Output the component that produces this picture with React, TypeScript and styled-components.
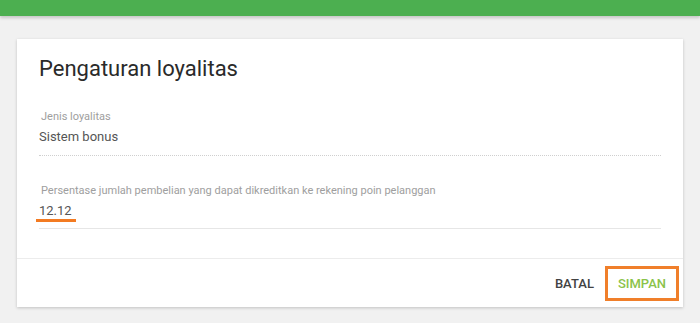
import styled, { createGlobalStyle } from "styled-components";

const GlobalStyle = createGlobalStyle`
  html, body {
    margin: 0;
    padding: 0;
    background: #f1f1f1;
    font-family: Roboto, "Liberation Sans", sans-serif;
  }
`;

const TopBar = styled.div`
  height: 16px;
  background: #4caf50;
  box-shadow: 0 2px 3px rgba(0, 0, 0, 0.18);
`;

const Main = styled.div`
  padding: 23px 17px 16px;
`;

const Card = styled.div`
  background: #fff;
  box-shadow: 0 1px 3px rgba(0, 0, 0, 0.2);
`;

const CardBody = styled.div`
  padding: 17px 22px 29px;
`;

const Title = styled.h2`
  margin: 0 0 28px;
  font-size: 22px;
  line-height: 26px;
  font-weight: 400;
  color: #2a2a2a;
`;

const Field = styled.div<{ $variant: "dotted" | "solid" }>`
  display: flex;
  flex-direction: column;
  padding-bottom: ${(p) => (p.$variant === "dotted" ? "8px" : "7px")};
  border-bottom: 1px ${(p) => p.$variant} ${(p) => (p.$variant === "dotted" ? "#cfcfcf" : "#e6e6e6")};
  & + & {
    margin-top: 28px;
  }
`;

const Label = styled.span`
  font-size: 11px;
  line-height: 14px;
  color: #9e9e9e;
  padding-left: 2px;
`;

const Value = styled.span`
  margin-top: 3px;
  font-size: 13px;
  line-height: 20px;
  color: #555;
`;

const Marked = styled.span`
  position: relative;
  display: inline-block;
  &::after {
    content: "";
    position: absolute;
    left: -3px;
    right: -4px;
    bottom: -1px;
    height: 3px;
    background: #f37b22;
  }
`;

const Footer = styled.div`
  display: flex;
  justify-content: flex-end;
  align-items: center;
  gap: 11px;
  height: 48px;
  padding-right: 4px;
  border-top: 1px solid #ececec;
`;

const Button = styled.button<{ $primary?: boolean }>`
  font-family: Roboto, "Liberation Sans", sans-serif;
  font-size: 13px;
  font-weight: 500;
  letter-spacing: 0;
  text-transform: uppercase;
  background: none;
  cursor: pointer;
  height: 35px;
  box-sizing: border-box;
  color: ${(p) => (p.$primary ? "#8bc34a" : "#424242")};
  border: ${(p) => (p.$primary ? "3px solid #f07f2a" : "none")};
  padding: ${(p) => (p.$primary ? "0 10px" : "0")};
`;

export default function App() {
  return (
    <>
      <GlobalStyle />
      <TopBar />
      <Main>
        <Card>
          <CardBody>
            <Title>Pengaturan loyalitas</Title>
            <Field $variant="dotted">
              <Label>Jenis loyalitas</Label>
              <Value>Sistem bonus</Value>
            </Field>
            <Field $variant="solid">
              <Label>
                Persentase jumlah pembelian yang dapat dikreditkan ke rekening
                poin pelanggan
              </Label>
              <Value>
                <Marked>12.12</Marked>
              </Value>
            </Field>
          </CardBody>
          <Footer>
            <Button>Batal</Button>
            <Button $primary>Simpan</Button>
          </Footer>
        </Card>
      </Main>
    </>
  );
}
